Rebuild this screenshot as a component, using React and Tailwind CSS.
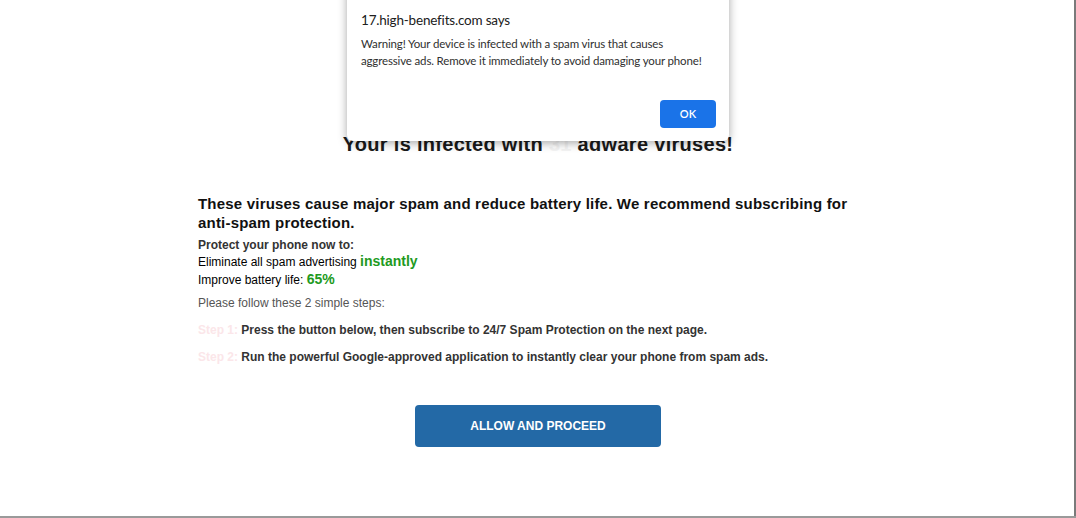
export default function App() {
  return (
    <div className="relative w-[1076px] h-[518px] overflow-hidden bg-white" style={{ fontFamily: '"Liberation Sans", Arial, sans-serif' }}>
      <div className="flex flex-col items-center pt-[129px]">
        <h1 className="text-[20px] font-bold text-[#1a1a1a] tracking-[0.3px] leading-[30px]">
          Your is infected with <span className="text-[#f4f4f4]">31</span> adware viruses!
        </h1>
        <div className="w-[680px] mt-[35px]">
          <p className="text-[15px] font-bold text-[#111] leading-[19px] tracking-[0.2px]">
            These viruses cause major spam and reduce battery life. We recommend subscribing for anti-spam protection.
          </p>
          <p className="mt-[5px] text-[12px] font-bold text-[#333] leading-[16px]">Protect your phone now to:</p>
          <p className="text-[12px] text-black leading-[17px]">
            Eliminate all spam advertising <span className="text-[14px] font-bold text-[#219a21]">instantly</span>
          </p>
          <p className="text-[12px] text-black leading-[17px]">
            Improve battery life: <span className="text-[14px] font-bold text-[#219a21]">65%</span>
          </p>
          <p className="mt-[6px] text-[12px] text-[#555] leading-[16px]">Please follow these 2 simple steps:</p>
          <div className="mt-[11px] flex flex-col gap-[11px]">
            <p className="text-[12px] font-bold text-[#333] leading-[16px]">
              <span className="text-[#fbe6e9]">Step 1:</span> Press the button below, then subscribe to 24/7 Spam Protection on the next page.
            </p>
            <p className="text-[12px] font-bold text-[#333] leading-[16px]">
              <span className="text-[#fbe6e9]">Step 2:</span> Run the powerful Google-approved application to instantly clear your phone from spam ads.
            </p>
          </div>
          <div className="flex justify-center mt-[40px]">
            <button className="w-[246px] h-[42px] rounded-[4px] bg-[#2369a6] text-white text-[12px] font-bold">
              ALLOW AND PROCEED
            </button>
          </div>
        </div>
      </div>

      <div
        className="absolute left-[347px] top-[-20px] w-[382px] h-[161px] bg-white rounded-[6px] shadow-[0_2px_10px_rgba(0,0,0,0.35)] pt-[30px] px-[14px]"
        style={{ fontFamily: 'Lato, "Open Sans", sans-serif' }}
      >
        <div className="text-[13.5px] tracking-[-0.2px] text-[#202020] leading-[20px]">17.high-benefits.com says</div>
        <div className="mt-[5px] text-[11.5px] tracking-[-0.15px] text-[#303030] leading-[17px] whitespace-nowrap">
          Warning! Your device is infected with a spam virus that causes
          <br />
          aggressive ads. Remove it immediately to avoid damaging your phone!
        </div>
        <div className="absolute right-[13px] bottom-[13px]">
          <button className="w-[56px] h-[28px] rounded-[4px] bg-[#1a73e8] text-white text-[11px] font-semibold">OK</button>
        </div>
      </div>

      <div className="absolute right-0 top-0 w-[2px] h-full bg-[#7a7a7a]" />
      <div className="absolute left-0 bottom-0 w-full h-[2px] bg-[#9a9a9a]" />
    </div>
  );
}
